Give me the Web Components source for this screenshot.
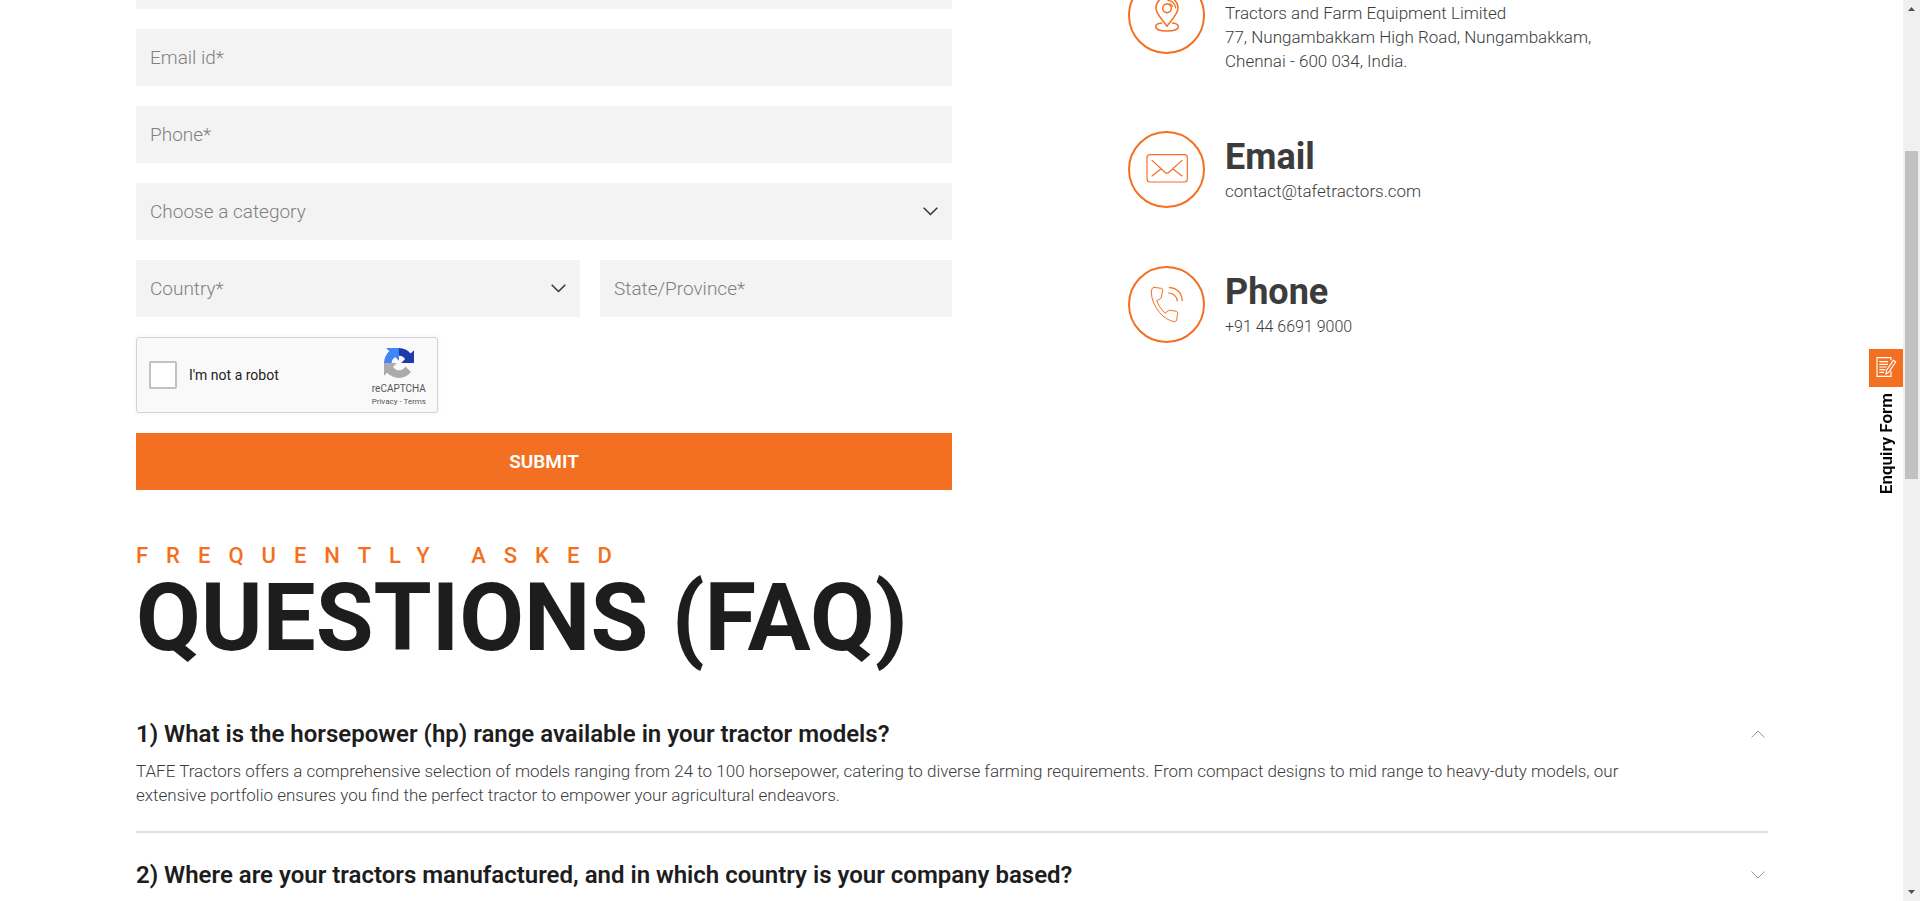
<!DOCTYPE html>
<html lang="en">
<head>
<meta charset="utf-8">
<meta name="viewport" content="width=device-width, initial-scale=1">
<title>Contact us – TAFE Tractors</title>
<style>
  html, body { margin: 0; height: 100%; overflow: hidden; background: #fff; }
  body { font-family: Roboto, "Liberation Sans", sans-serif; color: #1d1d1d; }
</style>
</head>
<body>
<contact-page></contact-page>

<script>
const define = (name, html, setup) => {
  const template = document.createElement('template');
  template.innerHTML = '<style>*{box-sizing:border-box}' +
    '.sr{position:absolute;width:1px;height:1px;overflow:hidden;clip-path:inset(50%);white-space:nowrap}</style>' + html;
  customElements.define(name, class extends HTMLElement {
    connectedCallback() {
      if (this.shadowRoot) return;
      this.attachShadow({ mode: 'open' }).append(template.content.cloneNode(true));
      if (setup) setup(this, this.shadowRoot);
    }
  });
};

define('text-field', `
  <style>
    :host { display: block; }
    input { display: block; width: 100%; height: 57px; padding: 0 14px; border: 0; border-radius: 0;
      background: #f3f3f3; color: #444; font: 300 19px Roboto, sans-serif; outline-color: #f36f21; }
    input::placeholder { color: #808080; opacity: 1; }
  </style>
  <label class="sr" for="control"></label>
  <input id="control">
`, (host, root) => {
  const input = root.querySelector('input');
  root.querySelector('label').textContent = host.getAttribute('label');
  input.placeholder = host.getAttribute('label');
  input.type = host.getAttribute('type') || 'text';
});

define('select-field', `
  <style>
    :host { display: grid; align-items: center; }
    select, svg { grid-area: 1 / 1; }
    select { appearance: none; width: 100%; height: 57px; padding: 0 40px 0 14px; border: 0; border-radius: 0;
      background: #f3f3f3; color: #808080; font: 300 19px Roboto, sans-serif; outline-color: #f36f21; }
    svg { justify-self: end; margin-right: 14px; pointer-events: none; }
  </style>
  <label class="sr" for="control"></label>
  <select id="control"><option></option></select>
  <svg width="15" height="9" viewBox="0 0 15 9" fill="none" stroke="#333" stroke-width="1.5"><path d="M.7.8 7.5 7.5 14.3.8"/></svg>
`, (host, root) => {
  root.querySelector('label').textContent = host.getAttribute('label');
  root.querySelector('option').textContent = host.getAttribute('label');
});

define('robot-check', `
  <style>
    :host { display: flex; align-items: center; width: 302px; height: 76px; padding: 0 11px 0 12px;
      border: 1px solid #d3d3d3; border-radius: 3px; background: #f9f9f9; box-shadow: 0 0 4px 1px rgba(0,0,0,.04); }
    input { appearance: none; width: 28px; height: 28px; margin: 0 12px 0 0; border: 2px solid #c1c1c1; border-radius: 2px; background: #fff; }
    input:checked { background: #4285f4; }
    label { flex: 1; font-size: 14px; color: #222; }
    .brand { display: flex; flex-direction: column; align-items: center; padding-top: 6px; color: #555; font-size: 10px; line-height: 12px; }
    svg { margin-bottom: 5px; }
    .legal { font-size: 8px; line-height: 13px; }
    a { color: inherit; text-decoration: none; }
  </style>
  <input type="checkbox" id="robot"><label for="robot">I'm not a robot</label>
  <div class="brand">
    <svg width="30" height="30" viewBox="0 0 64 64">
      <path fill="#1C3AA9" d="M64 31.955l-.033-1.37V4.687l-7.16 7.16C50.948 4.674 42.033.093 32.05.093c-10.4 0-19.622 4.96-25.458 12.64l11.736 11.86a15.55 15.55 0 0 1 4.754-5.334c2.05-1.6 4.952-2.906 8.968-2.906.485 0 .86.057 1.135.163 4.976.393 9.288 3.14 11.828 7.124l-8.307 8.307L64 31.953"/>
      <path fill="#4285F4" d="M31.862.094l-1.37.033H4.594l7.16 7.16C4.58 13.147 0 22.06 0 32.046c0 10.4 4.96 19.622 12.64 25.458L24.5 45.768a15.55 15.55 0 0 1-5.334-4.754c-1.6-2.05-2.906-4.952-2.906-8.968 0-.485.057-.86.163-1.135.393-4.976 3.14-9.288 7.124-11.828l8.307 8.307L31.86.095"/>
      <path fill="#ABABAB" d="M.001 32.045l.033 1.37v25.898l7.16-7.16c5.86 7.173 14.774 11.754 24.76 11.754 10.4 0 19.622-4.96 25.458-12.64l-11.736-11.86a15.55 15.55 0 0 1-4.754 5.334c-2.05 1.6-4.952 2.906-8.968 2.906-.485 0-.86-.057-1.135-.163-4.976-.393-9.288-3.14-11.828-7.124l8.307-8.307c-10.522.04-22.4.066-27.295-.005"/>
    </svg>
    <span>reCAPTCHA</span>
    <span class="legal"><a href="#privacy">Privacy</a> - <a href="#terms">Terms</a></span>
  </div>
`);

define('enquiry-form', `
  <style>
    :host { display: block; }
    form { display: grid; gap: 20px; }
    .pair { display: grid; grid-template-columns: 444fr 352fr; gap: 20px; }
    button { height: 57px; border: 0; background: #f36f21; color: #fff; font: 600 19px Roboto, sans-serif; cursor: pointer; }
  </style>
  <form>
    <text-field label="Name*"></text-field>
    <text-field label="Email id*" type="email"></text-field>
    <text-field label="Phone*" type="tel"></text-field>
    <select-field label="Choose a category"></select-field>
    <div class="pair">
      <select-field label="Country*"></select-field>
      <text-field label="State/Province*"></text-field>
    </div>
    <robot-check></robot-check>
    <button type="submit">SUBMIT</button>
  </form>
`);

define('contact-card', `
  <style>
    :host { display: flex; align-items: center; gap: 20px; }
    :host([tall]) { align-items: flex-start; }
    :host([tall]) .ring { margin-top: 43px; }
    .ring { flex: none; width: 77px; height: 77px; border: 2px solid #f36f21; border-radius: 50%; }
    h2 { margin: 0 0 1px; color: #3c3c3c; font-size: 36px; line-height: 42px; font-weight: 700; }
    .text { color: #3c3c3c; font-size: 17px; line-height: 24px; font-weight: 300; }
  </style>
  <div class="ring"><slot name="icon"></slot></div>
  <div><h2><slot name="title"></slot></h2><div class="text"><slot></slot></div></div>
`);

define('contact-details', `
  <style>
    :host { display: grid; gap: 58px; align-content: start; }
    svg { display: block; width: 76px; height: 76px; margin: -2px; fill: none; stroke: #f36f21; stroke-width: 3.5; stroke-linejoin: round; stroke-linecap: round; }
    a { color: inherit; text-decoration: none; }
    .number { font-size: 16px; }
  </style>
  <contact-card tall>
    <svg slot="icon" viewBox="0 0 228 228">
      <path stroke-width="4.5" d="M117 148C108 132 84 113 84 93a33 33 0 0 1 66 0C150 113 126 132 117 148Z"/>
      <circle cx="117" cy="94" r="13" stroke-width="4.5"/>
      <path d="M120 70a25 25 0 0 1 23 23M126 80a14 14 0 0 1 8 9"/>
      <path stroke-width="4.5" d="M101 138c-11 1-18 6-18 11 0 8 15 13 34 13s34-5 34-13c0-5-7-10-18-11"/>
    </svg>
    <span slot="title">Address</span>
    International Marketing<br>Tractors and Farm Equipment Limited<br>77, Nungambakkam High Road, Nungambakkam,<br>Chennai - 600 034, India.
  </contact-card>
  <contact-card>
    <svg slot="icon" viewBox="0 0 228 228">
      <rect x="57" y="71" width="121" height="82" rx="9"/>
      <path d="M72 88 110 123q7 7 14 0L162 88M72 135 98 115M162 135 136 115"/>
    </svg>
    <span slot="title">Email</span>
    <a href="mailto:contact@tafetractors.com">contact@tafetractors.com</a>
  </contact-card>
  <contact-card>
    <svg slot="icon" viewBox="0 0 228 228">
      <path stroke-width="3" d="M77 64 100 67q5 1 4 6L100 93q-1 4-4 6L86 104q5 17 25 38l9-7q4-3 8-2l17 3q5 1 4 6L146 162q-1 5-7 5-24-4-44-27Q71 112 70 78q0-13 7-14Z"/>
      <path d="M124 65q35 2 39 39M122 81q23 2 26 24"/>
    </svg>
    <span slot="title">Phone</span>
    <a class="number" href="tel:+914466919000">+91 44 6691 9000</a>
  </contact-card>
`);

define('faq-item', `
  <style>
    :host { display: block; padding: 27px 0 24px; border-bottom: 2px solid #e0e0e0; }
    h3 { margin: 0; }
    button { display: flex; justify-content: space-between; align-items: center; width: 100%; padding: 0 3px 0 0; border: 0;
      background: none; color: #1d1d1d; font: 600 24px/30px Roboto, sans-serif; text-align: left; cursor: pointer; }
    :host([open]) svg { transform: rotate(180deg); }
    .answer { display: none; margin-top: 10px; padding-right: 120px; color: #3c3c3c; font-size: 17px; line-height: 24px; font-weight: 300; }
    :host([open]) .answer { display: block; }
  </style>
  <h3><button type="button"><slot name="question"></slot>
    <svg width="14" height="8" viewBox="0 0 14 8" fill="none" stroke="#999"><path d="M.5.5 7 7 13.5.5"/></svg></button></h3>
  <div class="answer"><slot></slot></div>
`, (host, root) => {
  const button = root.querySelector('button');
  const sync = () => button.setAttribute('aria-expanded', host.hasAttribute('open'));
  button.addEventListener('click', () => { host.toggleAttribute('open'); sync(); });
  sync();
});

define('faq-section', `
  <style>
    :host { display: block; padding-top: 54px; }
    p { margin: 0; color: #f36f21; font-size: 22px; line-height: 24px; font-weight: 500; letter-spacing: 18px; }
    h2 { margin: 0 0 24px; font-size: 94px; line-height: 100px; font-weight: 700; }
  </style>
  <p>FREQUENTLY ASKED</p>
  <h2>QUESTIONS (FAQ)</h2>
  <faq-item open>
    <span slot="question">1) What is the horsepower (hp) range available in your tractor models?</span>
    TAFE Tractors offers a comprehensive selection of models ranging from 24 to 100 horsepower, catering to diverse farming requirements. From compact designs to mid range to heavy-duty models, our extensive portfolio ensures you find the perfect tractor to empower your agricultural endeavors.
  </faq-item>
  <faq-item>
    <span slot="question">2) Where are your tractors manufactured, and in which country is your company based?</span>
  </faq-item>
`);

define('enquiry-tab', `
  <style>
    :host { position: fixed; top: 349px; right: 17px; }
    a { display: flex; flex-direction: column; align-items: center; gap: 6px; width: 34px; color: #000; text-decoration: none;
      font-size: 17px; line-height: 20px; font-weight: 600; }
    svg { display: block; background: #f36f21; }
    span { writing-mode: vertical-rl; transform: rotate(180deg); }
  </style>
  <a href="#enquiry">
    <svg width="34" height="38" viewBox="0 0 102 114" fill="none" stroke="#fff" stroke-width="3.5">
      <path d="M66 34V26H24V82H66V66M31 38H57M31 46H57M31 54H53M31 62H49M31 70H45"/>
      <path d="M73 34 80 39 59 70 51 75 52 65Z"/>
    </svg>
    <span>Enquiry Form</span>
  </a>
`);

define('scroll-rail', `
  <style>
    :host { display: flex; flex-direction: column; align-items: stretch; width: 17px; height: 100%; background: #f0f0f0; }
    svg { flex: none; display: block; }
    .before { flex: 134; } .thumb { flex: 328; margin: 0 2px; background: #c1c1c1; } .after { flex: 405; }
  </style>
  <svg width="17" height="17"><path fill="#505050" d="M5 11 8.500 7 12 11Z"/></svg>
  <div class="before"></div><div class="thumb"></div><div class="after"></div>
  <svg width="17" height="17"><path fill="#505050" d="M5 6 8.500 10 12 6Z"/></svg>
`);

define('contact-page', `
  <style>
    :host { display: grid; grid-template-columns: minmax(0, 1fr) 17px; height: 100vh; }
    .view { overflow: hidden; }
    main { margin-top: -66px; padding: 0 135px 0 136px; }
    .top { display: grid; grid-template-columns: 1fr 1fr; }
    enquiry-form { padding-top: 18px; }
    contact-details { padding-left: 176px; }
  </style>
  <div class="view">
    <main>
      <div class="top">
        <enquiry-form></enquiry-form>
        <contact-details></contact-details>
      </div>
      <faq-section></faq-section>
    </main>
  </div>
  <scroll-rail aria-hidden="true"></scroll-rail>
  <enquiry-tab></enquiry-tab>
`);
</script>
</body>
</html>
